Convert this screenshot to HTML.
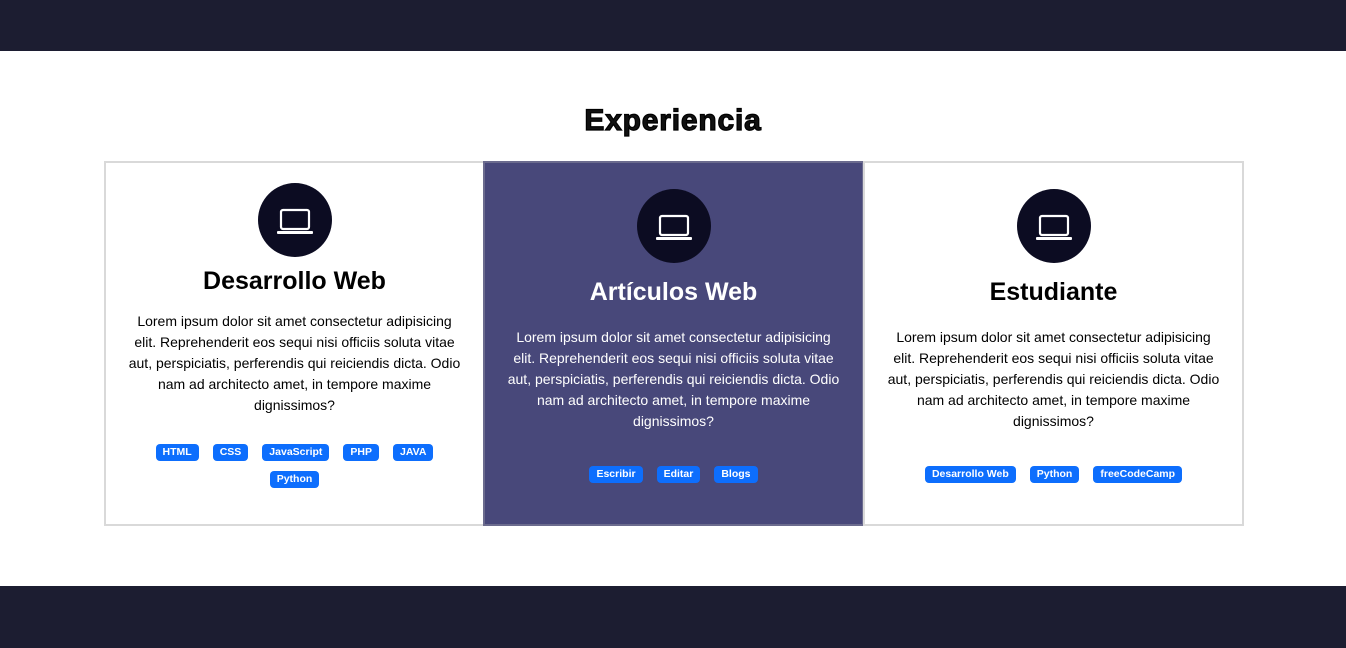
<!DOCTYPE html>
<html><head><meta charset="utf-8"><style>
*{margin:0;padding:0;box-sizing:border-box}
body{width:1346px;height:648px;overflow:hidden;background:#fff;font-family:"Liberation Sans",sans-serif;position:relative}
.top{position:absolute;left:0;top:0;width:1346px;height:51px;background:#1c1d31}
.foot{position:absolute;left:0;top:586px;width:1346px;height:62px;background:#1c1d31}
h2{position:absolute;left:0;width:1346px;top:104px;text-align:center;font-size:30px;font-weight:900;color:#111;letter-spacing:0.8px;font-family:"Liberation Sans",sans-serif;-webkit-text-stroke:1.2px #000}
.card{position:absolute;top:161px;height:365px;width:381px;border:2px solid #d9d9d9;text-align:center}
.c1{left:104px}.c2{left:483px;background:#48487a;border-color:#6b6b8e;color:#fff}.c3{left:863px}
.ic{position:absolute;left:50%;margin-left:-37px;width:74px;height:74px;border-radius:50%;background:#0c0c22}
.ic svg{position:absolute;left:19px;top:20px}
h3{position:absolute;left:0;width:100%;font-size:25px;font-weight:bold}
p{position:absolute;left:20px;width:337px;font-size:14px;line-height:21px}
.tags{position:absolute;left:30px;width:317px;font-size:0;line-height:0}
.t{display:inline-block;background:#0d6efd;color:#fff;font-size:10.5px;font-weight:bold;line-height:17px;height:17px;padding:0 7px;border-radius:4px;margin:0 7px 10px}
</style></head><body>
<div class="top"></div>
<h2>Experiencia</h2>
<div class="card c1">
<div class="ic" style="top:20px"><svg width="36" height="34" viewBox="0 0 36 34"><rect x="4" y="7" width="28" height="19" rx="2" fill="none" stroke="#fff" stroke-width="2.2"/><rect x="0" y="28" width="36" height="3" rx="1" fill="#fff"/></svg></div>
<h3 style="top:104px">Desarrollo Web</h3>
<p style="top:148px">Lorem ipsum dolor sit amet consectetur adipisicing elit. Reprehenderit eos sequi nisi officiis soluta vitae aut, perspiciatis, perferendis qui reiciendis dicta. Odio nam ad architecto amet, in tempore maxime dignissimos?</p>
<div class="tags" style="top:281px"><span class="t">HTML</span><span class="t">CSS</span><span class="t">JavaScript</span><span class="t">PHP</span><span class="t">JAVA</span><span class="t">Python</span></div>
</div>
<div class="card c2">
<div class="ic" style="top:26px"><svg width="36" height="34" viewBox="0 0 36 34"><rect x="4" y="7" width="28" height="19" rx="2" fill="none" stroke="#fff" stroke-width="2.2"/><rect x="0" y="28" width="36" height="3" rx="1" fill="#fff"/></svg></div>
<h3 style="top:115px">Artículos Web</h3>
<p style="top:164px">Lorem ipsum dolor sit amet consectetur adipisicing elit. Reprehenderit eos sequi nisi officiis soluta vitae aut, perspiciatis, perferendis qui reiciendis dicta. Odio nam ad architecto amet, in tempore maxime dignissimos?</p>
<div class="tags" style="top:303px"><span class="t">Escribir</span><span class="t">Editar</span><span class="t">Blogs</span></div>
</div>
<div class="card c3">
<div class="ic" style="top:26px"><svg width="36" height="34" viewBox="0 0 36 34"><rect x="4" y="7" width="28" height="19" rx="2" fill="none" stroke="#fff" stroke-width="2.2"/><rect x="0" y="28" width="36" height="3" rx="1" fill="#fff"/></svg></div>
<h3 style="top:115px">Estudiante</h3>
<p style="top:164px">Lorem ipsum dolor sit amet consectetur adipisicing elit. Reprehenderit eos sequi nisi officiis soluta vitae aut, perspiciatis, perferendis qui reiciendis dicta. Odio nam ad architecto amet, in tempore maxime dignissimos?</p>
<div class="tags" style="top:303px"><span class="t">Desarrollo Web</span><span class="t">Python</span><span class="t">freeCodeCamp</span></div>
</div>
<div class="foot"></div>
</body></html>
